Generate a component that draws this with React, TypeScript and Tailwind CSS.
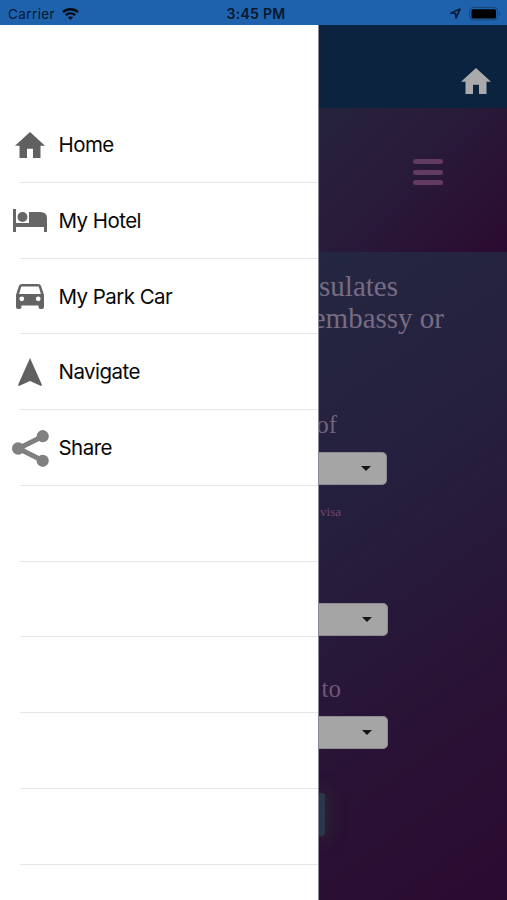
import React from "react";

type IconProps = { className?: string };

const HomeIcon = ({ className }: IconProps) => (
  <svg viewBox="2 3 20 17" preserveAspectRatio="none" className={className} fill="currentColor">
    <path d="M10 20v-6h4v6h5v-8h3L12 3 2 12h3v8z" />
  </svg>
);

const HotelIcon = ({ className }: IconProps) => (
  <svg viewBox="0 0 34 24" className={className} fill="currentColor">
    <path d="M0 0h3v14h13V3h11q7 0 7 6v14h-3v-5H3v5H0z" />
    <circle cx="9.5" cy="8" r="5" />
  </svg>
);

const CarIcon = ({ className }: IconProps) => (
  <svg viewBox="0 0 28 25" className={className}>
    <path d="M6 0h16q2.500 0 3.200 2.200L28 11v12q0 2-2 2h-1.500q-2 0-2-2v-1.500h-17V23q0 2-2 2H2q-2 0-2-2V11l2.800-8.800Q3.500 0 6 0z" fill="currentColor" />
    <path d="M5.300 2.500h17.400l2.200 7.500H3.100z" fill="#fff" />
    <circle cx="5.800" cy="14.800" r="2.400" fill="#fff" />
    <circle cx="22.200" cy="14.800" r="2.400" fill="#fff" />
  </svg>
);

const NavigateIcon = ({ className }: IconProps) => (
  <svg viewBox="0 0 24 28" className={className} fill="currentColor">
    <path d="M12 0 24 27l-1 1-11-5-11 5-1-1z" />
  </svg>
);

const ShareIcon = ({ className }: IconProps) => (
  <svg viewBox="0 0 37 37" className={className} fill="currentColor">
    <path d="M31 6.200 6.500 18.500 31 30.800" fill="none" stroke="currentColor" strokeWidth="5" />
    <circle cx="6.200" cy="18.500" r="6.200" />
    <circle cx="30.700" cy="6.200" r="6.100" />
    <circle cx="30.700" cy="30.800" r="6.100" />
  </svg>
);

const items = [
  { label: "Home", icon: <HomeIcon className="h-[26px] w-[30px] text-[#606060]" /> },
  { label: "My Hotel", icon: <HotelIcon className="h-6 w-[34px] text-[#666666]" /> },
  { label: "My Park Car", icon: <CarIcon className="h-[25px] w-7 text-[#646464]" /> },
  { label: "Navigate", icon: <NavigateIcon className="h-7 w-6 text-[#606060]" /> },
  { label: "Share", icon: <ShareIcon className="size-[37px] text-[#808080]" /> },
  ...Array.from({ length: 5 }, () => ({ label: "", icon: null })),
];

function StatusBar() {
  return (
    <header className="grid h-[25px] shrink-0 grid-cols-3 items-center bg-[#1e62ad] pt-[2px] text-[#06182d]">
      <div className="flex items-center gap-[7px] pl-2">
        <span className="text-[13.500px] leading-4 tracking-[0.400px]">Carrier</span>
        <svg viewBox="0 0 17 12" className="h-3 w-[17px] text-[#020a14]" fill="none" stroke="currentColor" strokeWidth="2.400">
          <path d="M1 4.200c4.400-4 10.600-4 15 0M3.800 7.200c2.700-2.500 6.700-2.500 9.400 0" />
          <path d="M8.500 12 5.900 9.300c1.500-1.200 3.700-1.200 5.200 0z" fill="currentColor" stroke="none" />
        </svg>
      </div>
      <div className="pl-[5px] text-center text-[14px] leading-4 font-semibold tracking-[0.300px]">3:45 PM</div>
      <div className="flex items-center justify-end gap-2 pr-[6px]">
        <svg viewBox="0 0 12 12" className="size-[11px]" fill="none" stroke="currentColor" strokeWidth="1.600" strokeLinejoin="round">
          <path d="M11 1 1 5.600l5 .4.500 5z" />
        </svg>
        <svg viewBox="0 0 32 14" className="h-[14px] w-8">
          <rect x=".5" y=".5" width="28" height="12.500" rx="3.500" fill="none" stroke="#174677" />
          <rect x="2.500" y="2.200" width="24.500" height="9.300" rx="1.500" fill="#000" />
          <path d="M30 4.500q2 2.200 0 4.500z" fill="#174677" />
        </svg>
      </div>
    </header>
  );
}

function Drawer() {
  return (
    <nav className="w-[319px] shrink-0 border-r border-[#85899b] bg-white pt-[82px]">
      <ul>
        {items.map(({ label, icon }, i) => (
          <li key={i} className="flex h-[75.750px] flex-col">
            <div className="flex grow items-center pt-[1.500px]">
              <div className="flex w-[60px] shrink-0 justify-center">{icon}</div>
              <span className="-ml-[1.500px] text-[20.500px] leading-6 tracking-[-0.550px] text-[#080808]">{label}</span>
            </div>
            <div className="ml-5 h-px shrink-0 bg-[#e6e6e6]" />
          </li>
        ))}
      </ul>
    </nav>
  );
}

function Select({ className }: { className: string }) {
  return (
    <div className={`flex h-[33px] shrink-0 items-center justify-end rounded-r-[5px] border border-l-0 border-[#8d8b91] bg-[#a5a5a5] pr-[15px] ${className}`}>
      <svg viewBox="0 0 10 5" className="h-[5px] w-[10px]">
        <path d="M0 0h10L5 5z" fill="#161616" />
      </svg>
    </div>
  );
}

function Page() {
  return (
    <main className="flex w-[188px] flex-col overflow-hidden">
      <div className="flex h-[83px] shrink-0 items-end justify-end bg-[#0b233e] pr-[16px] pb-[14px]">
        <HomeIcon className="h-[26px] w-[30px] text-[#aaaaac]" />
      </div>
      <div className="flex h-36 shrink-0 justify-center bg-linear-135 from-[#26233e] via-[#291939] via-50% to-[#2b0a30] pt-[51px] pl-[30px]">
        <div className="flex w-[30px] flex-col gap-[5.500px]">
          <div className="h-[5px] rounded-full bg-[#613b60]" />
          <div className="h-[5px] rounded-full bg-[#613b60]" />
          <div className="h-[5px] rounded-full bg-[#613b60]" />
        </div>
      </div>
      <div className="flex grow flex-col items-start bg-[linear-gradient(145deg,#242742_0%,#25203e_33%,#291436_65%,#2b0a30_100%)] pt-[18px] font-['Liberation_Serif',serif] text-[#776c83]">
        <h1 className="text-[29px] leading-8 whitespace-nowrap">
          <span className="flex w-[79px] justify-end">sulates</span>
          <span className="flex w-[125px] justify-end">embassy or</span>
        </h1>
        <p className="mt-[76px] flex w-[18px] justify-end text-[25px] leading-[30px] text-[#71627b]">of</p>
        <Select className="mt-[11.500px] w-[68px]" />
        <p className="mt-[19.500px] flex w-[22px] justify-end text-[13px] leading-4 text-[#754571]">visa</p>
        <Select className="mt-[83px] w-[69px]" />
        <p className="mt-[38px] flex w-[22px] justify-end text-[25px] leading-[30px] text-[#71567b]">to</p>
        <Select className="mt-[11.500px] w-[69px]" />
        <div className="mt-[44px] h-[43px] w-[6px] rounded-r-[3px] bg-[#2b354b] shadow-[0_0_18px_2px_#303033]" />
      </div>
    </main>
  );
}

export default function App() {
  return (
    <div className="flex h-[900px] w-[507px] flex-col overflow-hidden bg-white font-[Inter,sans-serif]">
      <StatusBar />
      <div className="flex min-h-0 grow">
        <Drawer />
        <Page />
      </div>
    </div>
  );
}
